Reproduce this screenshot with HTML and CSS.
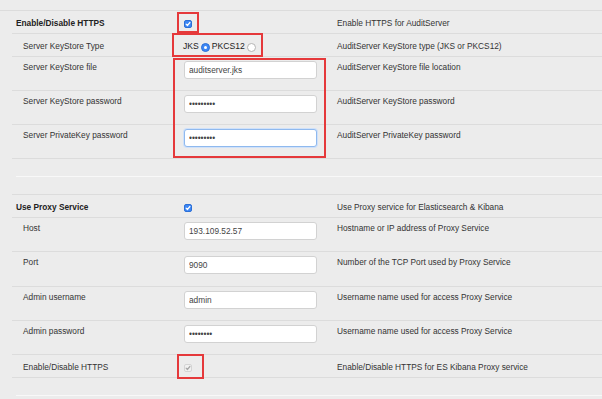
FILE: index.html
```html
<!DOCTYPE html>
<html>
<head>
<meta charset="utf-8">
<link rel="stylesheet" href="styles.css">
</head>
<body>
<div class="cap"></div>
<section class="group">
  <div class="row short first">
    <div class="label head">Enable/Disable HTTPS</div>
    <div class="ctl"><span class="cb on"><svg viewBox="0 0 8 8"><path d="M2.1 4.2 L3.4 5.5 L5.9 2.5"/></svg></span></div>
    <div class="desc">Enable HTTPS for AuditServer</div>
  </div>
  <div class="row short">
    <div class="label">Server KeyStore Type</div>
    <div class="ctl radios"><span>JKS</span><span class="rd on"></span><span>PKCS12</span><span class="rd"></span></div>
    <div class="desc">AuditServer KeyStore type (JKS or PKCS12)</div>
  </div>
  <div class="row tall">
    <div class="label">Server KeyStore file</div>
    <div class="ctl"><input class="inp" type="text" value="auditserver.jks"></div>
    <div class="desc">AuditServer KeyStore file location</div>
  </div>
  <div class="row tall">
    <div class="label">Server KeyStore password</div>
    <div class="ctl"><input class="inp" type="password" value="123456789"></div>
    <div class="desc">AuditServer KeyStore password</div>
  </div>
  <div class="row tall">
    <div class="label">Server PrivateKey password</div>
    <div class="ctl"><input class="inp focus" type="password" value="123456789"></div>
    <div class="desc">AuditServer PrivateKey password</div>
  </div>
  <span class="mark m1"></span>
  <span class="mark m2"></span>
  <span class="mark m3"></span>
</section>
<div class="sep"></div>
<section class="group">
  <div class="row short">
    <div class="label head">Use Proxy Service</div>
    <div class="ctl"><span class="cb on"><svg viewBox="0 0 8 8"><path d="M2.1 4.2 L3.4 5.5 L5.9 2.5"/></svg></span></div>
    <div class="desc">Use Proxy service for Elasticsearch &amp; Kibana</div>
  </div>
  <div class="row tall">
    <div class="label">Host</div>
    <div class="ctl"><input class="inp" type="text" value="193.109.52.57"></div>
    <div class="desc">Hostname or IP address of Proxy Service</div>
  </div>
  <div class="row tall tall35">
    <div class="label">Port</div>
    <div class="ctl"><input class="inp" type="text" value="9090"></div>
    <div class="desc">Number of the TCP Port used by Proxy Service</div>
  </div>
  <div class="row tall">
    <div class="label">Admin username</div>
    <div class="ctl"><input class="inp" type="text" value="admin"></div>
    <div class="desc">Username name used for access Proxy Service</div>
  </div>
  <div class="row tall">
    <div class="label">Admin password</div>
    <div class="ctl"><input class="inp" type="password" value="12345678"></div>
    <div class="desc">Username name used for access Proxy Service</div>
  </div>
  <div class="row short">
    <div class="label">Enable/Disable HTTPS</div>
    <div class="ctl"><span class="cb off"><svg viewBox="0 0 8 8"><path d="M2.1 4.2 L3.4 5.5 L5.9 2.5"/></svg></span></div>
    <div class="desc">Enable/Disable HTTPS for ES Kibana Proxy service</div>
  </div>
  <span class="mark m4"></span>
</section>
<div class="sep"></div>
</body>
</html>
```
FILE: styles.css
```css
* { box-sizing: border-box; }
html, body { margin: 0; padding: 0; }
body {
  background: #ececec;
  font-family: "Liberation Sans", Arial, Helvetica, sans-serif;
  font-size: 8.3px;
  color: #333;
  width: 602px;
  height: 399px;
  overflow: hidden;
}
.cap {
  height: 11px;
  border-bottom: 1px solid #dcdcdc;
}
.group {
  position: relative;
  margin-left: 12px;
  border-bottom: 1px solid #dcdcdc;
}
.row {
  display: grid;
  grid-template-columns: 172px 133px 1fr;
  border-top: 1px solid #dcdcdc;
}
.row.first { border-top: 0; height: 22px; }
.row.short { height: 23px; align-items: center; }
.row.short.first { height: 22px; }
.row.short .label, .row.short .desc { padding-top: 1px; }
.row.tall { height: 34px; padding-top: 4px; align-items: start; }
.row.tall35 { height: 35px; }
.label { padding-left: 11px; line-height: 10px; }
.label.head { padding-left: 4px; font-weight: bold; color: #222; }
.row.tall .label, .row.tall .desc { margin-top: 1px; }
.desc { padding-left: 20px; line-height: 10px; }
.ctl { display: flex; align-items: center; }
.cb {
  width: 8px; height: 8px; border-radius: 2px;
  margin-top: 4px;
  display: inline-flex;
}
.cb svg { width: 8px; height: 8px; }
.cb path { fill: none; stroke-width: 1.2; stroke-linecap: round; stroke-linejoin: round; }
.cb.on { background: #3d87f5; border: 1px solid #2c6fd6; }
.cb.on svg { margin: -1px; }
.cb.on path { stroke: #fff; }
.cb.off { background: #f1f1f1; border: 1px solid #d4d4d4; }
.cb.off svg { margin: -1px; }
.cb.off path { stroke: #a8a8a8; }
.radios { margin-left: -1px; gap: 2px; color: #222; padding-top: 1px; font-size: 8.6px; }
.rd {
  width: 9px; height: 9px; border-radius: 50%;
  margin-top: 3px;
  background: #fff; border: 1px solid #b4b4b4;
  display: inline-block; position: relative;
}
.rd.on { background: #3d87f5; border-color: #2c6fd6; }
.rd.on::after {
  content: ""; position: absolute; left: 2px; top: 2px;
  width: 3px; height: 3px; border-radius: 50%; background: #fff;
}
.inp {
  width: 133px; height: 18px; margin: 0;
  border: 1px solid #d2d2d2; border-radius: 3px;
  background: #fff; padding: 0 0 0 4px;
  font-family: "Liberation Sans", Arial, sans-serif;
  font-size: 8.3px; color: #444; outline: none;
}
.inp.focus { border-color: #8fb9ee; box-shadow: 0 0 0 1px #cfe1fa; }
.sep {
  height: 1px;
  margin: 17px 0 17px 16px;
  background: #f8f8f8;
}
.mark {
  position: absolute;
  border: 2px solid #e5393b;
}
.m1 { left: 165px; top: 1px; width: 22px; height: 21px; }
.m2 { left: 160px; top: 22px; width: 91px; height: 24px; }
.m3 { left: 161px; top: 47px; width: 153px; height: 100px; }
.m4 { left: 165px; top: 160px; width: 27px; height: 25px; }
```
